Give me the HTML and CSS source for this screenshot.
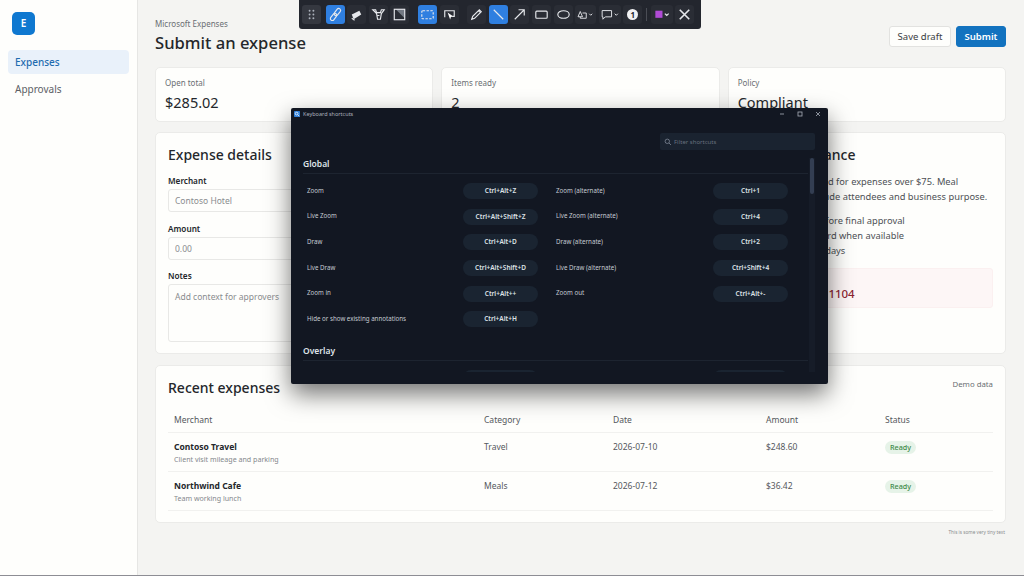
FILE: index.html
```html
<!DOCTYPE html>
<html lang="en">
<head>
  <meta charset="UTF-8" />
  <title>Microsoft Expenses</title>
  <link rel="stylesheet" href="styles.css">
</head>
<body>

  <div class="app">
    <!-- SIDEBAR -->
    <aside class="sidebar">
      <div class="logo">E</div>
      <a class="nav-item active">Expenses</a>
      <a class="nav-item">Approvals</a>
    </aside>

    <!-- MAIN PAGE -->
    <main class="main">
      <header class="page-head">
        <div>
          <div class="eyebrow">Microsoft Expenses</div>
          <h1>Submit an expense</h1>
        </div>
        <div class="actions">
          <button class="btn">Save draft</button>
          <button class="btn primary">Submit</button>
        </div>
      </header>

      <section class="stats">
        <div class="card stat"><div class="stat-label">Open total</div><div class="stat-value">$285.02</div></div>
        <div class="card stat"><div class="stat-label">Items ready</div><div class="stat-value">2</div></div>
        <div class="card stat"><div class="stat-label">Policy</div><div class="stat-value">Compliant</div></div>
      </section>

      <section class="columns">
        <div class="card panel details">
          <h2>Expense details</h2>
          <label for="merchant">Merchant</label>
          <input id="merchant" type="text" placeholder="Contoso Hotel" />
          <label for="amount">Amount</label>
          <input id="amount" type="text" placeholder="0.00" />
          <label for="notes">Notes</label>
          <textarea id="notes" placeholder="Add context for approvers"></textarea>
        </div>
        <div class="card panel guidance">
          <h2>Receipt guidance</h2>
          <p>Receipts are required for expenses over $75. Meal expenses must include attendees and business purpose.</p>
          <ul>
            <li>Review totals before final approval</li>
            <li>Attach a hotel card when available</li>
            <li>Submit within 7 days</li>
          </ul>
          <div class="alert">
            <div>Needs attention</div>
            <strong>Flagged item 1104</strong>
          </div>
        </div>
      </section>

      <section class="card recent">
        <div class="recent-head">
          <h2>Recent expenses</h2>
          <span class="demo">Demo data</span>
        </div>
        <div class="row row-head">
          <div>Merchant</div><div>Category</div><div>Date</div><div>Amount</div><div>Status</div>
        </div>
        <div class="row">
          <div><div class="name">Contoso Travel</div><div class="sub">Client visit mileage and parking</div></div>
          <div>Travel</div><div>2026-07-10</div><div>$248.60</div><div><span class="badge">Ready</span></div>
        </div>
        <div class="row">
          <div><div class="name">Northwind Cafe</div><div class="sub">Team working lunch</div></div>
          <div>Meals</div><div>2026-07-12</div><div>$36.42</div><div><span class="badge">Ready</span></div>
        </div>
      </section>

      <div class="tiny">This is some very tiny text</div>
    </main>
  </div>

  <!-- DRAWING TOOLBAR -->
  <div class="toolbar">
    <span class="tool grip"><svg viewBox="0 0 20 20"><g fill="#aab0ba"><circle cx="8" cy="6" r="1"/><circle cx="12" cy="6" r="1"/><circle cx="8" cy="10" r="1"/><circle cx="12" cy="10" r="1"/><circle cx="8" cy="14" r="1"/><circle cx="12" cy="14" r="1"/></g></svg></span>
    <span class="tool on"><svg viewBox="0 0 20 20"><g transform="rotate(-52 10 10)"><rect x="2.500" y="8" width="8.500" height="4" rx="2" class="line"/><rect x="9" y="8" width="8.500" height="4" rx="2" class="line"/></g></svg></span>
    <span class="tool"><svg viewBox="0 0 20 20"><path d="M5 10l8-4 2 4-8 5z" fill="#e6e8ec"/><path d="M5 14l3 2" class="line"/></svg></span>
    <span class="tool"><svg viewBox="0 0 20 20"><path d="M4 5h3l1 3h4l1-3h3l-3 4-1 6H9L8 9zM9 11h2" class="line"/></svg></span>
    <span class="tool gap-r"><svg viewBox="0 0 20 20"><path d="M6 4.500h9.500V14z" fill="#747a84"/><rect x="4.500" y="4.500" width="11" height="11" class="line"/></svg></span>
    <span class="tool on"><svg viewBox="0 0 20 20"><rect x="4" y="6" width="12" height="8.500" rx="1" class="line" stroke-dasharray="2.500 1.500"/></svg></span>
    <span class="tool gap-r"><svg viewBox="0 0 20 20"><path d="M5 13V6h10v6h-2" class="line"/><path d="M8 8l6 4-2.500.6-.8 2.600z" fill="#fff"/></svg></span>
    <span class="tool"><svg viewBox="0 0 20 20"><path d="M5 15l1-3 7-7 2 2-7 7zM12 6l2 2" class="line"/></svg></span>
    <span class="tool on"><svg viewBox="0 0 20 20"><path d="M5 5l10 10" class="line"/></svg></span>
    <span class="tool"><svg viewBox="0 0 20 20"><path d="M5 15L15 5M9 5h6v6" class="line"/></svg></span>
    <span class="tool"><svg viewBox="0 0 20 20"><rect x="4" y="6.500" width="12" height="7.500" rx="1" class="line"/></svg></span>
    <span class="tool"><svg viewBox="0 0 20 20"><ellipse cx="10" cy="10" rx="6" ry="4" class="line"/></svg></span>
    <span class="tool wide"><svg viewBox="0 0 28 20"><path d="M7 6l-3 7h6zM10 8h5v7H7v-2" class="line"/><path d="M19 9l2 2 2-2" class="line"/></svg></span>
    <span class="tool wide2"><svg viewBox="0 0 28 20"><path d="M4 5h12v8H8l-3 3v-3H4z" class="line"/><path d="M20 9l2 2 2-2" class="line"/></svg></span>
    <span class="tool"><span class="step">1</span></span>
    <span class="sep"></span>
    <span class="tool wide3"><svg viewBox="0 0 22 20"><rect x="4" y="6" width="7.500" height="7.500" fill="#b04bd6"/><path d="M14 9l2 2 2-2" class="line"/></svg></span>
    <span class="tool"><svg viewBox="0 0 20 20"><path d="M5 5l10 10M15 5L5 15" class="line thick"/></svg></span>
  </div>

  <!-- SHORTCUTS WINDOW -->
  <div class="dialog">
    <div class="titlebar">
      <svg class="app-icon" viewBox="0 0 8 8"><rect width="8" height="8" rx="1" fill="#2f7fd8"/><circle cx="3.500" cy="3.500" r="1.800" fill="none" stroke="#fff"/><path d="M5 5l2 2" stroke="#fff"/></svg>
      <span class="win-title">Keyboard shortcuts</span>
      <span class="win-controls">
        <svg viewBox="0 0 8 8"><path d="M2 4h4"/></svg>
        <svg viewBox="0 0 8 8"><rect x="2" y="2" width="4" height="4"/></svg>
        <svg viewBox="0 0 8 8"><path d="M2 2l4 4M6 2L2 6"/></svg>
      </span>
    </div>
    <div class="filter-bar">
      <div class="filter">
        <svg viewBox="0 0 8 8"><circle cx="3.300" cy="3.300" r="2.200"/><path d="M5 5l2 2"/></svg>
        <span>Filter shortcuts</span>
      </div>
    </div>
    <div class="scroll-area">
      <div class="shortcuts">
        <h3>Global</h3>
        <div class="keys">
          <span>Zoom</span><kbd>Ctrl+Alt+Z</kbd><span>Zoom (alternate)</span><kbd>Ctrl+1</kbd>
          <span>Live Zoom</span><kbd>Ctrl+Alt+Shift+Z</kbd><span>Live Zoom (alternate)</span><kbd>Ctrl+4</kbd>
          <span>Draw</span><kbd>Ctrl+Alt+D</kbd><span>Draw (alternate)</span><kbd>Ctrl+2</kbd>
          <span>Live Draw</span><kbd>Ctrl+Alt+Shift+D</kbd><span>Live Draw (alternate)</span><kbd>Ctrl+Shift+4</kbd>
          <span>Zoom in</span><kbd>Ctrl+Alt++</kbd><span>Zoom out</span><kbd>Ctrl+Alt+-</kbd>
          <span>Hide or show existing annotations</span><kbd>Ctrl+Alt+H</kbd><span></span><span></span>
        </div>
        <h3 class="second">Overlay</h3>
        <div class="keys">
          <span></span><kbd></kbd><span></span><kbd></kbd>
        </div>
      </div>
      <div class="scrollbar"><div class="thumb"></div></div>
    </div>
  </div>

</body>
</html>
```

FILE: styles.css
```css
* {
  box-sizing: border-box;
}
body {
  margin: 0;
  height: 576px;
  overflow: hidden;
  font-family: "Noto Sans", "Open Sans", sans-serif;
  color: #24272b;
  background: #f4f4f2;
}
.app {
  display: flex;
  height: 576px;
  border-bottom: 1px solid #8d8d94;
}

/* sidebar */
.sidebar {
  width: 138px;
  flex-shrink: 0;
  padding: 12px 8px 0;
  background: #fefefc;
  border-right: 1px solid #e6e6e4;
}
.logo {
  width: 23px;
  height: 23px;
  margin: 0 0 15px 4px;
  border-radius: 5px;
  background: #0f78d0;
  color: white;
  font-size: 10px;
  font-weight: 600;
  line-height: 23px;
  text-align: center;
}
.nav-item {
  display: block;
  height: 24px;
  margin-bottom: 3px;
  padding-left: 7px;
  border-radius: 4px;
  font-size: 10px;
  line-height: 25px;
  color: #5c6066;
}
.nav-item.active {
  background: #e9f1fa;
  color: #1f6cb0;
  font-weight: 500;
}

/* main page */
.main {
  flex: 1;
  min-width: 0;
  padding: 18px 18px 0 17px;
}
.page-head {
  display: flex;
  justify-content: space-between;
  height: 49px;
}
.eyebrow {
  font-size: 8px;
  line-height: 11px;
  color: #6a6e73;
}
h1 {
  margin: 2px 0 0;
  font-size: 16.600px;
  line-height: 23px;
  font-weight: 500;
}
.actions {
  display: flex;
  gap: 5px;
  padding-top: 8px;
}
.btn {
  width: 62px;
  height: 21px;
  padding: 0;
  border: 1px solid #e2e2e0;
  border-radius: 3px;
  background: #fefefc;
  color: #3a3d42;
  font-family: inherit;
  font-size: 9.500px;
}
.btn.primary {
  width: 50px;
  border-color: #1272bf;
  background: #1272bf;
  color: white;
  font-weight: 600;
}
.card {
  background: #fefefc;
  border: 1px solid #ebebe9;
  border-radius: 5px;
}
.stats {
  display: grid;
  grid-template-columns: repeat(3, 1fr);
  gap: 8px;
  height: 55px;
}
.stat {
  padding: 9px 9px 0;
}
.stat-label {
  font-size: 8px;
  line-height: 11px;
  color: #6a6e73;
}
.stat-value {
  margin-top: 4px;
  font-size: 14.500px;
  line-height: 20px;
}
.columns {
  display: grid;
  grid-template-columns: repeat(3, 1fr);
  gap: 8px;
  height: 222px;
  margin-top: 10px;
}
.panel {
  padding: 12px 12px 0;
}
.details {
  grid-column: span 2;
}
h2 {
  margin: 0;
  font-size: 14px;
  line-height: 20px;
  font-weight: 500;
}
label {
  display: block;
  margin-top: 10.500px;
  font-size: 8.200px;
  line-height: 11px;
  font-weight: 600;
}
.details h2 + label {
  margin-top: 10px;
}
input, textarea {
  display: block;
  width: 100%;
  margin-top: 3px;
  padding: 0 6px;
  border: 1px solid #e8e8e6;
  border-radius: 3px;
  background: #fefefc;
  font-family: inherit;
  font-size: 8.500px;
}
input {
  height: 23px;
}
textarea {
  height: 58px;
  padding-top: 6px;
  resize: none;
}
input::placeholder, textarea::placeholder {
  color: #8a8c8f;
}
.guidance p {
  margin: 9px 0 0;
  font-size: 9.300px;
  line-height: 15px;
  color: #4d5055;
}
.guidance ul {
  margin: 9px 0 0;
  padding-left: 14px;
  font-size: 9.300px;
  line-height: 15px;
  color: #4d5055;
}
.alert {
  height: 40px;
  margin-top: 10px;
  padding: 5px 12px;
  border: 1px solid #fbf0f0;
  border-radius: 3px;
  background: #fdf6f6;
  font-size: 9.500px;
  line-height: 13px;
  color: #8c2432;
}
.alert strong {
  display: block;
  font-size: 11.500px;
  line-height: 14px;
  font-weight: 500;
}

/* recent expenses */
.recent {
  height: 158px;
  margin-top: 11px;
  padding: 12px 12px 0;
}
.recent-head {
  display: flex;
  justify-content: space-between;
  height: 35px;
}
.demo {
  font-size: 7.800px;
  line-height: 12px;
  color: #6a6e73;
}
.row {
  display: grid;
  grid-template-columns: 310px 129px 153px 119px 115px;
  height: 39px;
  padding-top: 7px;
  border-bottom: 1px solid #f1f1ef;
  font-size: 8.500px;
  line-height: 13px;
  color: #55585d;
}
.row > div {
  padding-left: 6px;
}
.row-head {
  height: 20px;
  padding-top: 0;
}
.name {
  font-weight: 700;
  color: #24272b;
}
.sub {
  font-size: 7.100px;
  line-height: 12px;
  color: #85888c;
}
.badge {
  display: inline-block;
  height: 13px;
  padding: 0 5px;
  border-radius: 7px;
  background: #e6f3e8;
  color: #3c8a48;
  font-size: 7.200px;
  line-height: 13px;
  font-weight: 500;
}
.tiny {
  margin-top: 5px;
  padding-right: 1px;
  text-align: right;
  font-size: 4.700px;
  line-height: 8px;
  color: #8a8c8f;
}

/* toolbar over the page */
.toolbar {
  position: absolute;
  top: 0;
  left: 299px;
  width: 402px;
  height: 29px;
  display: flex;
  align-items: center;
  gap: 2.600px;
  padding: 0 3px;
  background: #23262e;
  border-radius: 0 0 3px 3px;
}
.tool {
  display: flex;
  align-items: center;
  justify-content: center;
  width: 19px;
  height: 19px;
  flex-shrink: 0;
  border-radius: 3px;
  background: #2a2d35;
}
.tool svg {
  display: block;
  width: 100%;
  height: 100%;
}
.tool.on {
  background: #2f7fe0;
}
.tool.grip {
  background: #353840;
  margin-right: 2px;
}
.tool.gap-r {
  margin-right: 6px;
}
.tool.wide {
  width: 21px;
}
.tool.wide2 {
  width: 22px;
}
.tool.wide3 {
  width: 22px;
}
.step {
  width: 11px;
  height: 11px;
  border-radius: 50%;
  background: #f1f2f4;
  color: #23262e;
  font-size: 8px;
  font-weight: 700;
  line-height: 11px;
  text-align: center;
}
.sep {
  width: 1px;
  height: 13px;
  margin: 0 1px;
  background: #4a4d55;
}
.line {
  fill: none;
  stroke: #e6e8ec;
  stroke-width: 1.200;
}
.line.thick {
  stroke-width: 1.700;
}

/* shortcuts window */
.dialog {
  position: absolute;
  top: 108px;
  left: 291px;
  width: 537px;
  height: 276px;
  background: #121722;
  border-radius: 2px;
  box-shadow: 0 10px 24px rgba(0,0,0,0.55);
  color: #c6cbd3;
  overflow: hidden;
}
.titlebar {
  display: flex;
  align-items: center;
  height: 12px;
  padding: 0 6px 0 3px;
}
.app-icon {
  width: 6px;
  height: 6px;
  margin-right: 3px;
}
.win-title {
  flex: 1;
  font-size: 5.500px;
  color: #aab0ba;
}
.win-controls {
  display: flex;
  gap: 10px;
}
.win-controls svg {
  width: 8px;
  height: 8px;
  fill: none;
  stroke: #aab0ba;
  stroke-width: 0.800;
}
.filter-bar {
  display: flex;
  justify-content: flex-end;
  height: 38px;
  padding: 13px 13px 0 0;
}
.filter {
  display: flex;
  align-items: center;
  gap: 2px;
  width: 155px;
  height: 17px;
  padding-left: 4px;
  border-radius: 2px;
  background: #1a2330;
  font-size: 6px;
  color: #67707e;
}
.filter svg {
  width: 8px;
  height: 8px;
  fill: none;
  stroke: #7d8695;
  stroke-width: 0.800;
}
.scroll-area {
  display: flex;
  height: 214px;
  padding-left: 12px;
  overflow: hidden;
}
.shortcuts {
  width: 505px;
  flex-shrink: 0;
}
h3 {
  margin: 0;
  height: 16px;
  border-bottom: 1px solid #1d2430;
  font-size: 8.500px;
  line-height: 11px;
  font-weight: 600;
  color: #dfe3e8;
}
h3.second {
  margin-top: 18px;
}
.keys {
  display: grid;
  grid-template-columns: 156px 75px 175px 75px;
  grid-auto-rows: 16px;
  row-gap: 9.700px;
  align-items: center;
  margin-top: 9px;
  padding-left: 4px;
  font-size: 6.200px;
}
.keys span {
  padding-bottom: 2px;
}
.keys span:nth-child(4n+3) {
  padding-left: 18px;
}
kbd {
  display: block;
  height: 16px;
  border-radius: 8px;
  background: #1a2431;
  font-family: inherit;
  font-size: 6.500px;
  font-weight: 600;
  line-height: 16px;
  text-align: center;
  color: #dfe3e8;
}
.scrollbar {
  width: 6px;
  height: 214px;
  margin-left: 1px;
  background: #161c28;
}
.thumb {
  width: 4px;
  height: 36px;
  margin-left: 1px;
  border-radius: 2px;
  background: #333e52;
}
```
